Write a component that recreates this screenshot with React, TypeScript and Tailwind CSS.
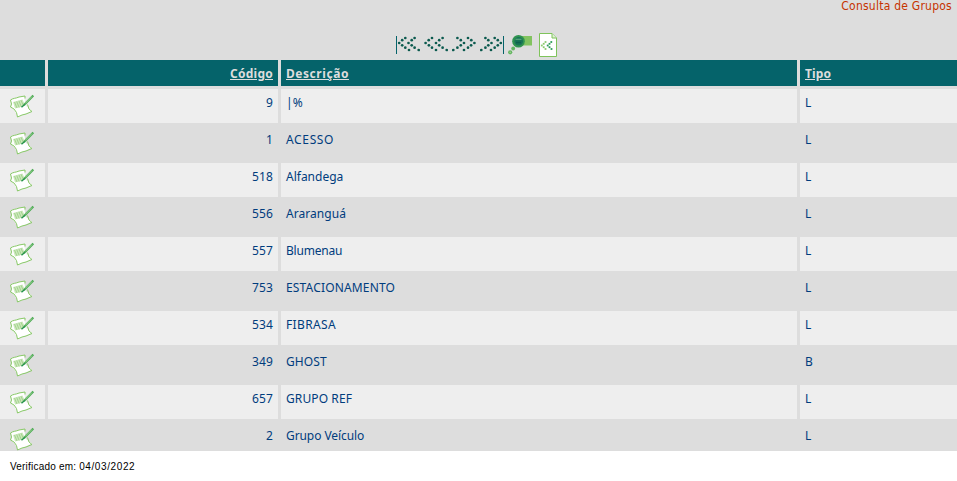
const rows: [string, string, string, string][] = [
  ["9", "|%", "L", "tracking-[0.2px]"],
  ["1", "ACESSO", "L", "tracking-[0.65px]"],
  ["518", "Alfandega", "L", ""],
  ["556", "Araranguá", "L", "tracking-[0.05px]"],
  ["557", "Blumenau", "L", "tracking-[-0.2px]"],
  ["753", "ESTACIONAMENTO", "L", "tracking-[0.16px]"],
  ["534", "FIBRASA", "L", "tracking-[0.35px]"],
  ["349", "GHOST", "B", "tracking-[0.1px]"],
  ["657", "GRUPO REF", "L", "tracking-[0.1px]"],
  ["2", "Grupo Veículo", "L", "tracking-[-0.08px]"],
];

const plainDots = [
  [8, 5], [4.7, 7.2], [1.6, 10], [4.9, 12.3], [8, 14.7], [12, 17],
  [18.6, 5], [15.2, 7.2], [12, 10], [15.2, 12.3], [18.6, 14.7], [22.7, 17],
];
const barDots = [
  [9.3, 5], [6.2, 7.2], [3.2, 10], [6.2, 12.3], [9.3, 14.7], [13, 17],
  [18.6, 5], [15.7, 7.2], [12.5, 10], [15.7, 12.3], [18.6, 14.7], [22.7, 17],
];

function Arrows({ flip, bar }: { flip?: boolean; bar?: boolean }) {
  return (
    <svg width="24" height="24" viewBox="0 0 24 24">
      <g transform={flip ? "translate(24 0) scale(-1 1)" : undefined}>
        {bar && <rect x="0" y="3" width="1" height="18" fill="#05636a" />}
        {(bar ? barDots : plainDots).map(([x, y], i) => (
          <circle key={i} cx={x} cy={y} r="1.35" fill="#0b5a4e" />
        ))}
      </g>
    </svg>
  );
}

function SearchIcon() {
  return (
    <svg width="24" height="24" viewBox="0 0 24 24">
      <rect x="11" y="3" width="13" height="9.5" fill="#82c360" />
      <circle cx="10.5" cy="8.3" r="6.3" fill="#2f9350" />
      <circle cx="10.7" cy="8.3" r="4.3" fill="#177455" />
      <path d="M7.5 6.3h6" stroke="#5aa67c" strokeWidth="1.2" />
      <path d="M8 9.5h5" stroke="#0d5f4d" strokeWidth="1.5" />
      <circle cx="5.2" cy="15.5" r="1.9" fill="#63b561" />
      <circle cx="2.2" cy="19.3" r="2.1" fill="#63b561" />
      <circle cx="2.2" cy="19.3" r=".8" fill="#a3d692" />
    </svg>
  );
}

function PageIcon() {
  return (
    <svg width="24" height="24" viewBox="0 0 24 24">
      <path d="M3.5 .5H16L20.5 5V23.5H3.5Z" fill="#fff" stroke="#7fc35b" />
      <path d="M16 .5V5H20.5" fill="#dff0d5" stroke="#7fc35b" />
      {[[9.5, 9], [7.7, 10.8], [5.8, 12.5], [7.7, 14.2], [9.5, 16]].map(([x, y]) => (
        <rect key={y} x={x - 0.9} y={y - 0.9} width="1.8" height="1.8" fill="#8bc96d" />
      ))}
      {[[15.3, 9], [13.5, 10.8], [11.7, 12.5], [13.5, 14.2], [15.5, 16]].map(([x, y]) => (
        <rect key={y} x={x - 0.9} y={y - 0.9} width="1.8" height="1.8" fill="#2b9a57" />
      ))}
    </svg>
  );
}

function EditIcon() {
  return (
    <svg width="26" height="26" viewBox="0 0 26 26" fill="none">
      <path d="M1.5 7C4 4.8 7 5.3 10 4L15.5 3V6L17 13 20 15.5 23 17.5 17 20.5 8.5 24 7.5 20 5 17 2 14 2.5 10Z" fill="#fff" />
      <path d="M16 5.5V3L10 4C7 5.5 4 5 1.5 7L2.5 11 1.5 14 5 16 7.5 19.5 8.5 24 13 22 17 21 23 18.5 20 16 18.5 11.5" stroke="#88c967" strokeWidth="1" />
      <path d="M4 9 13.5 6.5 16 12 12 14 6 15.5Z" fill="#cce7bd" />
      <path d="M5.5 9 8 15M7.7 8.5 10.2 14.5M9.9 7.8 12.4 13.8M12 7.2 14.5 13" stroke="#98cf80" strokeWidth=".8" />
      <path d="M15 12 24.3 2.5" stroke="#4eab55" strokeWidth="2.2" />
      <path d="M16.3 10.3 23 3.5" stroke="#b8dfa9" strokeWidth=".8" />
      <path d="M12.5 14.3 15.7 11.4" stroke="#23914a" strokeWidth="1.4" />
    </svg>
  );
}

export default function App() {
  return (
    <div className="h-[481px] w-[957px] overflow-hidden bg-white font-['Noto_Sans',sans-serif] text-[12px]">
      <div className="h-[451px] overflow-hidden bg-[#ddd]">
        <div className="h-[33px] pr-[5px] text-right font-['DejaVu_Sans_Condensed','DejaVu_Sans',sans-serif] leading-[12px] tracking-[0.24px] text-[#c63300]">Consulta de Grupos</div>
        <div className="flex h-[27px] justify-center gap-1 pr-px">
          <Arrows bar /><Arrows /><Arrows flip /><Arrows flip bar /><SearchIcon /><PageIcon />
        </div>
        <div className="grid h-[26px] grid-cols-[45px_230px_516px_157px] gap-x-[3px] font-bold leading-[27px] text-[#ddd] *:h-[26px] *:bg-[#05636a]">
          <div />
          <div className="pr-[5px] text-right tracking-[0.25px] underline">Código</div>
          <div className="pl-[5px] tracking-[0.55px] underline">Descrição</div>
          <div className="pl-[5px] tracking-[0.15px] underline">Tipo</div>
        </div>
        <div className="flex flex-col gap-[3px] pt-[3px]">
          {rows.map(([a, b, c, tracking], i) => (
            <div key={a} className={`grid h-[34px] shrink-0 grid-cols-[45px_230px_516px_157px] gap-x-[3px] leading-[28px] text-[#003c7d] ${i % 2 ? "" : "*:bg-[#eee]"}`}>
              <div className="pt-[4px] pl-[9px]"><EditIcon /></div>
              <div className="pr-[5px] text-right tracking-[0.14px]">{a}</div>
              <div className={`pl-[5px] ${tracking}`}>{b}</div>
              <div className="pl-[5px]">{c}</div>
            </div>
          ))}
        </div>
      </div>
      <div className="pt-[9px] pl-[10px] font-['Liberation_Sans',sans-serif] text-[10px] leading-[14px] tracking-[0.2px] text-black">
        Verificado em: <span className="tracking-[0.6px]">04/03/2022</span>
      </div>
    </div>
  );
}
